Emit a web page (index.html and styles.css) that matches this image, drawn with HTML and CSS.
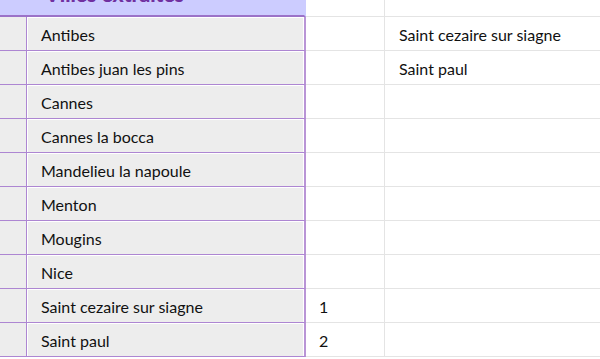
FILE: index.html
```html
<!DOCTYPE html>
<html>
<head>
<meta charset="utf-8">
<link rel="stylesheet" href="styles.css">
</head>
<body>
<div class="sheet">
  <div class="row head">
    <div class="title-cell"><span class="title">Villes extraites</span></div>
    <div class="cell c"></div>
    <div class="cell d"></div>
  </div>
  <div class="row"><div class="cell a"></div><div class="cell b">Antibes</div><div class="cell c"></div><div class="cell d">Saint cezaire sur siagne</div></div>
  <div class="row"><div class="cell a"></div><div class="cell b">Antibes juan les pins</div><div class="cell c"></div><div class="cell d">Saint paul</div></div>
  <div class="row"><div class="cell a"></div><div class="cell b">Cannes</div><div class="cell c"></div><div class="cell d"></div></div>
  <div class="row"><div class="cell a"></div><div class="cell b">Cannes la bocca</div><div class="cell c"></div><div class="cell d"></div></div>
  <div class="row"><div class="cell a"></div><div class="cell b">Mandelieu la napoule</div><div class="cell c"></div><div class="cell d"></div></div>
  <div class="row"><div class="cell a"></div><div class="cell b">Menton</div><div class="cell c"></div><div class="cell d"></div></div>
  <div class="row"><div class="cell a"></div><div class="cell b">Mougins</div><div class="cell c"></div><div class="cell d"></div></div>
  <div class="row"><div class="cell a"></div><div class="cell b">Nice</div><div class="cell c"></div><div class="cell d"></div></div>
  <div class="row"><div class="cell a"></div><div class="cell b">Saint cezaire sur siagne</div><div class="cell c">1</div><div class="cell d"></div></div>
  <div class="row"><div class="cell a"></div><div class="cell b">Saint paul</div><div class="cell c">2</div><div class="cell d"></div></div>
</div>
</body>
</html>
```
FILE: styles.css
```css
* { box-sizing: border-box; }
html, body { margin: 0; padding: 0; background: #fff; }
body { width: 600px; height: 359px; overflow: hidden; font-family: Lato, "Open Sans", sans-serif; font-size: 16px; color: #111; }
.sheet { display: flex; flex-direction: column; }
.row { display: flex; height: 34px; }
.row.head { height: 17px; }
.cell { display: flex; align-items: center; padding-top: 1px; white-space: nowrap; }
.title-cell {
  width: 306px; height: 17px; background: #ccccff;
  border-bottom: 2px solid #9b72c8; border-right: 2px solid #ccccff;
  overflow: hidden; padding-left: 45px;
}
.title { display: block; font-weight: 900; font-size: 21px; line-height: 21px; margin-top: -17px; color: #7030a0; }
.head .c, .head .d { border-bottom: 1px solid #e4e4e4; }
.a { width: 27px; background: #ededed; border-right: 1px solid #ad86d2; border-bottom: 1px solid #ad86d2; }
.b { width: 279px; background: #ededed; border-right: 2px solid #b995d6; border-bottom: 1px solid #ad86d2; padding-left: 14px; box-shadow: inset 1px 0 0 #fff, inset -1px 0 0 #fff, inset 0 1px 0 #fff; }
.c { width: 79px; border-right: 1px solid #e4e4e4; border-bottom: 1px solid #e4e4e4; padding-left: 13px; }
.d { flex: 1; border-bottom: 1px solid #e4e4e4; padding-left: 14px; }
```
